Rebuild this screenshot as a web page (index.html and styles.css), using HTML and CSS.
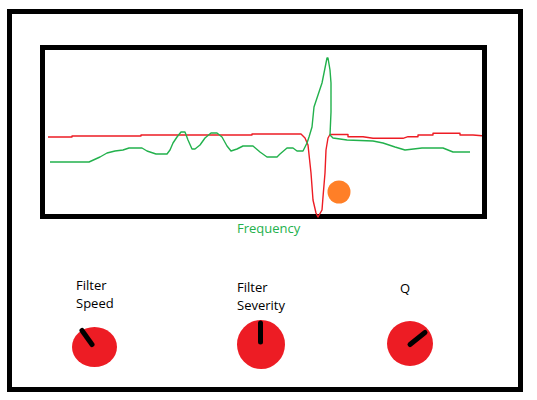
FILE: index.html
```html
<!DOCTYPE html>
<html lang="en">
<head>
  <meta charset="UTF-8">
  <meta name="viewport" content="width=device-width, initial-scale=1.0">
  <title>Filter</title>
  <link rel="stylesheet" href="styles.css">
</head>
<body>
  <div class="frame">
    <div class="screen">
      <svg class="plot" width="437" height="164" viewBox="45 50 437 164">
        <polyline class="curve-red" points="48,137 72,137 72,136 141,136 141,135 252,135 252,134 301,134 305,138 308,145 311,173 313,200 316,213 318,217 322,210 323,197 325,173 326,150 328,138 330,134.5 348,134.5 348,136.7 363,136.7 373,138.3 403,138.3 408,136.7 418,136.7 418,135 433,135 433,133.3 460,133.3 460,135 473,135 482,135.7"/>
        <polyline class="curve-green" points="50,162 89,162 100,157 107,153 115,151 123,150 129,148 142,148 147,151 156,154 167,154 170,150 173,143 177,137 181,132 185,132 188,140 192,149 195,149 200,145 205,138 211,133 217,133 222,137 227,146 231,151 237,149 243,146 253,146 260,152 267,157 277,157 280,154 287,148 293,148 297,151 303,151 307,143 309,137 312,127 314,107 318,95 322,83 324,73 327,58 328,58 330,70 331,83 331,112 330,135 333,138 347,140 373,141 383,143 395,147 405,150 422,148 443,148 453,152 470,152"/>
        <circle class="marker" cx="339" cy="192" r="11.5"/>
      </svg>
    </div>
    <div class="axis-label">Frequency</div>

    <div class="controls">
      <div class="control control-speed">
        <div class="control-label">Filter<br>Speed</div>
        <svg class="knob" width="45" height="40" viewBox="0 0 45 40">
          <ellipse cx="22.5" cy="20" rx="22.5" ry="20"/>
          <line x1="10" y1="3.5" x2="20" y2="17.5"/>
        </svg>
      </div>
      <div class="control control-severity">
        <div class="control-label">Filter<br>Severity</div>
        <svg class="knob" width="48" height="49" viewBox="0 0 48 49">
          <ellipse cx="24" cy="24.5" rx="24" ry="24.5"/>
          <line x1="23.5" y1="3" x2="23.5" y2="22"/>
        </svg>
      </div>
      <div class="control control-q">
        <div class="control-label">Q</div>
        <svg class="knob" width="46" height="45" viewBox="0 0 46 45">
          <ellipse cx="23" cy="22.5" rx="23" ry="22.5"/>
          <line x1="23" y1="23.5" x2="38" y2="11.5"/>
        </svg>
      </div>
    </div>
  </div>
</body>
</html>
```

FILE: styles.css
```css
html, body {
  margin: 0;
  padding: 0;
  background: #fff;
  font-family: "Open Sans", "Noto Sans", sans-serif;
}
.frame {
  margin: 9px 0 0 7px;
  width: 506px;
  height: 373px;
  border: 5px solid #000;
}
.screen {
  margin: 31px 0 0 28px;
  width: 437px;
  height: 164px;
  border: 5px solid #000;
}
.plot {
  display: block;
  overflow: visible;
}
.plot polyline {
  fill: none;
  stroke-width: 1.4;
  stroke-linejoin: round;
}
.curve-red {
  stroke: #ed1c24;
}
.curve-green {
  stroke: #22b14c;
}
.marker {
  fill: #ff7f27;
}
.axis-label {
  padding-left: 225px;
  font-size: 13px;
  line-height: 18px;
  color: #22b14c;
}
.controls {
  display: grid;
  grid-template-columns: 165px 150px 50px;
  padding-left: 60px;
  align-items: start;
}
.control-label {
  font-size: 13px;
  line-height: 18px;
  color: #000;
}
.knob {
  display: block;
}
.knob ellipse {
  fill: #ed1c24;
}
.knob line {
  stroke: #000;
  stroke-width: 5;
  stroke-linecap: round;
}
.control-speed {
  margin-top: 39px;
}
.control-speed .control-label {
  padding-left: 4px;
}
.control-speed .knob {
  margin-top: 15px;
}
.control-severity {
  margin-top: 41px;
}
.control-severity .knob {
  margin-top: 6px;
}
.control-q {
  margin-top: 42px;
}
.control-q .control-label {
  padding-left: 13px;
}
.control-q .knob {
  margin-top: 24px;
}
```
